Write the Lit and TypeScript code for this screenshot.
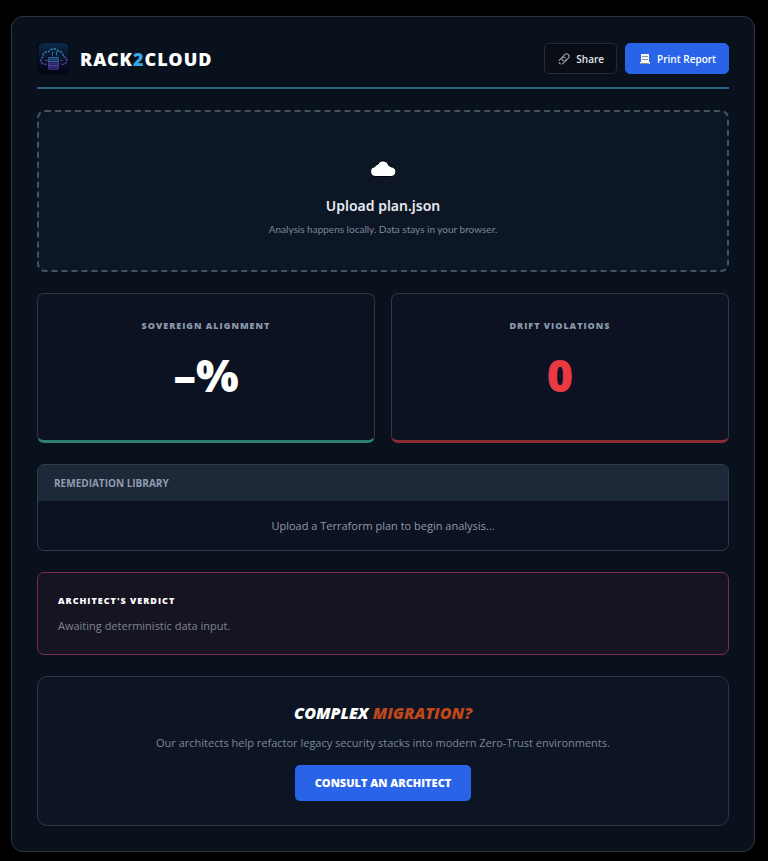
import { LitElement, html, css } from "lit";
import { customElement } from "lit/decorators.js";

@customElement("app-root")
export class AppRoot extends LitElement {
  static styles = css`
    :host {
      display: block;
      box-sizing: border-box;
      min-height: 100vh;
      padding: 16px 13px 9px 11px;
      background: #000;
      color: #e5eaf1;
      font-family: "Open Sans", "Noto Sans", sans-serif;
      font-size: 11px;
      line-height: 16px;
    }
    *, *::before, *::after { box-sizing: border-box; }
    h1, h2, p { margin: 0; }
    .report {
      display: flex;
      flex-direction: column;
      gap: 21px;
      padding: 25px;
      border: 1px solid #31363e;
      border-radius: 12px;
      background: #09111d;
    }
    .header {
      display: flex;
      align-items: center;
      justify-content: space-between;
      padding-bottom: 12px;
      border-bottom: 2px solid #2a6585;
    }
    .brand { display: flex; align-items: center; gap: 10px; }
    .logo { display: block; width: 33px; height: 33px; }
    .name {
      font-family: "Noto Sans", sans-serif;
      font-size: 18px;
      line-height: 24px;
      font-weight: 900;
      letter-spacing: 1px;
      color: #fff;
    }
    .accent { color: #38a9e4; }
    .actions { display: flex; gap: 8px; }
    .button {
      display: flex;
      align-items: center;
      justify-content: center;
      gap: 5px;
      height: 31px;
      padding: 0 12px;
      border: 1px solid #262b33;
      border-radius: 5px;
      background: #080d16;
      color: #e2e5ea;
      font: 600 10px/16px "Open Sans", sans-serif;
      cursor: pointer;
    }
    .primary { border-color: #2964e8; background: #2964e8; color: #fff; }
    .icon { display: block; width: 14px; height: 14px; }
    .upload {
      display: flex;
      flex-direction: column;
      align-items: center;
      justify-content: center;
      min-height: 162px;
      padding: 12px 24px 0;
      border: 2px dashed #44535f;
      border-radius: 8px;
      background: #0d1624;
      text-align: center;
      cursor: pointer;
    }
    .file { position: absolute; width: 1px; height: 1px; opacity: 0; }
    .cloud { display: block; width: 30px; height: 22px; margin-bottom: 16px; }
    .upload-title { font-family: "Noto Sans", sans-serif; font-size: 14px; line-height: 22px; font-weight: 600; }
    .hint { margin-top: 4px; font-family: "Lato", sans-serif; font-size: 10px; line-height: 16px; color: #7b8798; }
    .metrics { display: grid; grid-template-columns: 1fr 1fr; gap: 16px; }
    .metric {
      min-height: 150px;
      padding: 24px;
      border: 1px solid #303642;
      border-bottom-width: 3px;
      border-radius: 7px;
      background: #0c1221;
      text-align: center;
    }
    .aligned { border-bottom-color: #2f7f73; }
    .drift { border-bottom-color: #8a2b32; }
    .label {
      font-size: 9px;
      line-height: 16px;
      font-weight: 800;
      letter-spacing: 1px;
      color: #8c99ac;
    }
    .value {
      margin-top: 9px;
      font-family: "Noto Sans", sans-serif;
      font-size: 45px;
      line-height: 64px;
      font-weight: 900;
      color: #fff;
    }
    .alert { color: #e93a44; }
    .library {
      overflow: hidden;
      border: 1px solid #323b48;
      border-radius: 7px;
      background: #0c1221;
    }
    .library-title {
      padding: 10px 16px;
      background: #1d2838;
      color: #909daf;
      font-size: 10px;
      line-height: 16px;
      font-weight: 700;
    }
    .library-body { padding: 16px; line-height: 17px; color: #9099aa; text-align: center; }
    .verdict {
      padding: 20px;
      border: 1px solid #7a2c58;
      border-radius: 7px;
      background: #171422;
    }
    .verdict-title { font-size: 9px; line-height: 16px; font-weight: 800; letter-spacing: 1px; color: #fff; }
    .verdict-text { margin-top: 8px; line-height: 17px; color: #7d8495; }
    .consult {
      display: flex;
      flex-direction: column;
      align-items: center;
      padding: 24px;
      border: 1px solid #2d3542;
      border-radius: 10px;
      background: #0d1524;
      text-align: center;
    }
    .consult-title { font-size: 16px; line-height: 24px; font-weight: 800; font-style: italic; color: #fff; }
    .question { color: #bd471b; }
    .consult-text { margin: 9px 0 13px; line-height: 18px; color: #7d8799; }
    .cta {
      display: block;
      padding: 10px 20px;
      border-radius: 5px;
      background: #2964e8;
      color: #fff;
      font-size: 11px;
      line-height: 16px;
      font-weight: 800;
      text-decoration: none;
    }
  `;

  render() {
    return html`
      <main class="report">
        <header class="header">
          <div class="brand">
            <svg class="logo" viewBox="0 0 34 34" aria-hidden="true">
              <defs>
                <linearGradient id="tile" x1="0" y1="0" x2="0" y2="1">
                  <stop offset="0" stop-color="#0b2a48" />
                  <stop offset="0.5" stop-color="#07132a" />
                  <stop offset="1" stop-color="#050616" />
                </linearGradient>
                <linearGradient id="line" x1="0" y1="0" x2="0" y2="1">
                  <stop offset="0" stop-color="#2f86b0" /><stop offset="1" stop-color="#5a3596" />
                </linearGradient>
              </defs>
              <rect width="34" height="34" rx="5" fill="#05091a" />
              <rect x="1.5" y="1" width="31" height="31" rx="5" fill="url(#tile)" />
              <g fill="none" stroke="url(#line)">
                <path stroke-width="1.5" stroke-dasharray="2.5 1" d="M10 23H8a4 4 0 0 1-2-7.500a5 5 0 0 1 6-5.500a6 6 0 0 1 10-.5a5 5 0 0 1 5 5.500a4 4 0 0 1-1 8h-2" />
                <path d="M12 16h10v4H12zM12 20h10v4H12zM12 24h10v4H12zM14 18h5M14 22h5M14 26h5M16 10v4M20 10v4M8 19h3M24 19h2" />
              </g>
              <path fill="#1d4f80" d="M12 17h10v2H12z" />
              <path fill="#38307c" d="M12 21h10v2H12zM12 25h10v2H12z" />
            </svg>
            <h1 class="name">RACK<span class="accent">2</span>CLOUD</h1>
          </div>
          <div class="actions">
            <button class="button" type="button">
              <svg class="icon" viewBox="0 0 14 14" fill="none" stroke="#a5a8ad" aria-hidden="true">
                <rect x="4.500" y="3" width="8" height="5" rx="2.5" transform="rotate(-45 8.500 5.500)" />
                <rect x="1.500" y="6" width="8" height="5" rx="2.5" stroke-dasharray="3 1" transform="rotate(-45 5.500 8.500)" />
              </svg>
              Share
            </button>
            <button class="button primary" type="button">
              <svg class="icon" viewBox="0 0 14 14" aria-hidden="true">
                <path fill="#f4f5f7" d="M3 2h8v8h1v2H2v-2h1z" />
                <path stroke="#8b909a" d="M4 4.500h6M4 7.500h6M2 11.500h9" />
              </svg>
              Print Report
            </button>
          </div>
        </header>
        <label class="upload">
          <input class="file" type="file" accept=".json" />
          <svg class="cloud" viewBox="0 0 30 22" aria-hidden="true">
            <path fill="#fff" stroke="#000" d="M7 19.500a4.900 4.900 0 0 1-.3-9.700a4 4 0 0 1 3.300-2.600a5.700 5.700 0 0 1 10.800 1.500q1.500-.2 2.200 1.200a4.800 4.800 0 0 1 .3 9.600z" />
          </svg>
          <span class="upload-title">Upload plan.json</span>
          <span class="hint">Analysis happens locally. Data stays in your browser.</span>
        </label>
        <section class="metrics">
          <article class="metric aligned">
            <h2 class="label">SOVEREIGN ALIGNMENT</h2>
            <p class="value">–%</p>
          </article>
          <article class="metric drift">
            <h2 class="label">DRIFT VIOLATIONS</h2>
            <p class="value alert">0</p>
          </article>
        </section>
        <section class="library">
          <h2 class="library-title">REMEDIATION LIBRARY</h2>
          <p class="library-body">Upload a Terraform plan to begin analysis...</p>
        </section>
        <section class="verdict">
          <h2 class="verdict-title">ARCHITECT'S VERDICT</h2>
          <p class="verdict-text">Awaiting deterministic data input.</p>
        </section>
        <section class="consult">
          <h2 class="consult-title">COMPLEX <span class="question">MIGRATION?</span></h2>
          <p class="consult-text">Our architects help refactor legacy security stacks into modern Zero-Trust environments.</p>
          <a class="cta" href="#consult">CONSULT AN ARCHITECT</a>
        </section>
      </main>
    `;
  }
}
